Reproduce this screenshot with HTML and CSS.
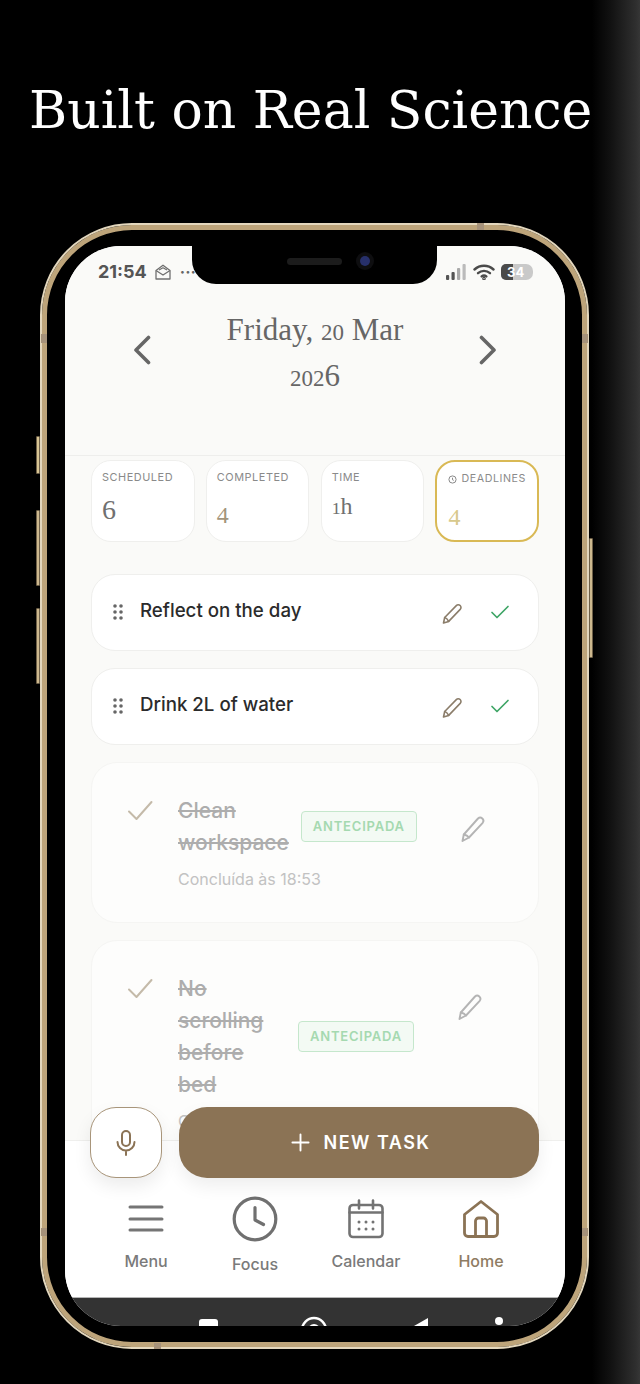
FILE: index.html
```html
<!DOCTYPE html>
<html lang="en">
<head>
<meta charset="utf-8">
<title>Built on Real Science</title>
<link rel="stylesheet" href="styles.css">
</head>
<body>
<div class="stage">
  <h1 class="headline">Built on Real Science</h1>
  <div class="phone">
    <span class="btn btn-l1"></span><span class="btn btn-l2"></span><span class="btn btn-l3"></span><span class="btn btn-r1"></span>
    <span class="band band-top"></span><span class="band band-lt"></span><span class="band band-rt"></span>
    <span class="band band-lb"></span><span class="band band-rb"></span><span class="band band-bot"></span>
    <div class="screen">
      <div class="notch"><span class="speaker"></span><span class="camera"></span></div>
      <header class="head">
        <div class="status">
          <div class="status-left">
            <span class="clock-time">21:54</span>
            <svg class="mail" viewBox="0 0 16 16" width="16" height="16" fill="none" stroke="#707070" stroke-width="1.3" stroke-linejoin="round"><path d="M1 6.5 8 1.2l7 5.3V15H1z"/><path d="M1 6.5 8 11l7-4.5"/><path d="M4 6 8 3.8 12 6"/></svg>
            <span class="dots">···</span>
          </div>
          <div class="status-right">
            <svg viewBox="0 0 21 16" width="21" height="16"><rect x="0" y="11" width="3.2" height="5" rx="1" fill="#555"/><rect x="5.5" y="8" width="3.2" height="8" rx="1" fill="#555"/><rect x="11" y="4" width="3.2" height="12" rx="1" fill="#aaa"/><rect x="16.5" y="0" width="3.2" height="16" rx="1" fill="#bbb"/></svg>
            <svg viewBox="0 0 22 16" width="22" height="16" fill="none" stroke="#4a4a4a" stroke-width="2.4" stroke-linecap="round"><path d="M1.5 5.5a14 14 0 0 1 19 0"/><path d="M5 9.2a9 9 0 0 1 12 0"/><path d="M8.6 12.4a4 4 0 0 1 4.8 0"/><circle cx="11" cy="14.6" r=".6"/></svg>
            <span class="battery"><span class="battery-fill"></span><span class="battery-num">34</span></span>
          </div>
        </div>
        <div class="datebar">
          <svg class="chev" viewBox="0 0 18 30" width="18" height="30" fill="none" stroke="#666" stroke-width="3.6" stroke-linecap="round" stroke-linejoin="round"><path d="M15.5 2.5 3 15l12.500 12.500"/></svg>
          <h2 class="date">Friday, <span class="os">20</span> Mar <span class="os">202</span>6</h2>
          <svg class="chev" viewBox="0 0 18 30" width="18" height="30" fill="none" stroke="#666" stroke-width="3.6" stroke-linecap="round" stroke-linejoin="round"><path d="M2.500 2.500 15 15 2.500 27.500"/></svg>
        </div>
      </header>

      <main class="list">
        <section class="stats">
          <div class="stat"><span class="stat-label">SCHEDULED</span><span class="stat-val val-six">6</span></div>
          <div class="stat"><span class="stat-label">COMPLETED</span><span class="stat-val val-four">4</span></div>
          <div class="stat"><span class="stat-label">TIME</span><span class="stat-val val-time"><span class="os">1</span>h</span></div>
          <div class="stat stat-alert">
            <span class="stat-label"><svg viewBox="0 0 10 10" width="9" height="9" fill="none" stroke="#888" stroke-width="1.100"><circle cx="5" cy="5" r="4"/><path d="M5 3v2.300l1.400.7"/></svg>DEADLINES</span>
            <span class="stat-val val-alert">4</span>
          </div>
        </section>

        <article class="task">
          <svg class="grip" viewBox="0 0 10 16" width="10" height="16" fill="#666"><circle cx="2" cy="2" r="1.800"/><circle cx="8" cy="2" r="1.800"/><circle cx="2" cy="8" r="1.800"/><circle cx="8" cy="8" r="1.800"/><circle cx="2" cy="14" r="1.800"/><circle cx="8" cy="14" r="1.800"/></svg>
          <span class="task-name">Reflect on the day</span>
          <svg class="edit" viewBox="0 0 24 24" width="24" height="24" fill="none" stroke="#8b7d6a" stroke-width="1.600" stroke-linejoin="round" stroke-linecap="round"><path d="M3.500 21 4.700 15.500 16.300 3.600a2.700 2.700 0 0 1 3.900 3.800L8.700 19.400z"/><path d="M4.700 15.500c1.200.3 3 2 4 3.900"/></svg>
          <svg class="tick" viewBox="0 0 20 16" width="20" height="16" fill="none" stroke="#3fa566" stroke-width="1.700" stroke-linecap="round" stroke-linejoin="round"><path d="M2 8.500 7 13.500 18 2.500"/></svg>
        </article>

        <article class="task">
          <svg class="grip" viewBox="0 0 10 16" width="10" height="16" fill="#666"><circle cx="2" cy="2" r="1.800"/><circle cx="8" cy="2" r="1.800"/><circle cx="2" cy="8" r="1.800"/><circle cx="8" cy="8" r="1.800"/><circle cx="2" cy="14" r="1.800"/><circle cx="8" cy="14" r="1.800"/></svg>
          <span class="task-name">Drink 2L of water</span>
          <svg class="edit" viewBox="0 0 24 24" width="24" height="24" fill="none" stroke="#8b7d6a" stroke-width="1.600" stroke-linejoin="round" stroke-linecap="round"><path d="M3.500 21 4.700 15.500 16.300 3.600a2.700 2.700 0 0 1 3.900 3.800L8.700 19.400z"/><path d="M4.700 15.500c1.200.3 3 2 4 3.900"/></svg>
          <svg class="tick" viewBox="0 0 20 16" width="20" height="16" fill="none" stroke="#3fa566" stroke-width="1.700" stroke-linecap="round" stroke-linejoin="round"><path d="M2 8.500 7 13.500 18 2.500"/></svg>
        </article>

        <article class="done">
          <svg class="done-check" viewBox="0 0 26 24" width="26" height="24" fill="none" stroke="#c4baa9" stroke-width="2" stroke-linecap="round" stroke-linejoin="round"><path d="M2 12.500 9.500 20 24.500 3"/></svg>
          <div class="done-body">
            <div class="done-row">
              <span class="done-title">Clean workspace</span>
              <span class="badge">ANTECIPADA</span>
            </div>
            <p class="done-sub">Concluída às 18:53</p>
          </div>
          <svg class="done-edit" viewBox="0 0 26 28" width="26" height="28" fill="none" stroke="#b4b4b4" stroke-width="1.900" stroke-linejoin="round" stroke-linecap="round"><path d="M2.500 26 3.800 19.500 18 3.500a3.200 3.200 0 0 1 4.700 4.300L9 22.500z"/><path d="M3.800 19.500c1.600.3 3.900 1.200 5.200 3"/></svg>
        </article>

        <article class="done">
          <svg class="done-check" viewBox="0 0 26 24" width="26" height="24" fill="none" stroke="#c4baa9" stroke-width="2" stroke-linecap="round" stroke-linejoin="round"><path d="M2 12.500 9.500 20 24.500 3"/></svg>
          <div class="done-body">
            <div class="done-row">
              <span class="done-title">No scrolling before bed</span>
              <span class="badge">ANTECIPADA</span>
            </div>
            <p class="done-sub">Concluída às 18:53</p>
          </div>
          <svg class="done-edit" viewBox="0 0 26 28" width="26" height="28" fill="none" stroke="#b4b4b4" stroke-width="1.900" stroke-linejoin="round" stroke-linecap="round"><path d="M2.500 26 3.800 19.500 18 3.500a3.200 3.200 0 0 1 4.700 4.300L9 22.500z"/><path d="M3.800 19.500c1.600.3 3.900 1.200 5.200 3"/></svg>
        </article>
      </main>

      <nav class="tabs">
        <a class="tab tab-menu">
          <svg viewBox="0 0 40 40" width="40" height="40" fill="none" stroke="#757575" stroke-width="3" stroke-linecap="round"><path d="M4 8h32M4 20h32M4 31h32"/></svg>
          <span>Menu</span>
        </a>
        <a class="tab tab-focus">
          <svg viewBox="0 0 46 46" width="46" height="46" fill="none" stroke="#707070" stroke-width="3.200" stroke-linecap="round" stroke-linejoin="round"><circle cx="23" cy="23" r="20.800"/><path d="M23 11.500V24l8.500 4.500"/></svg>
          <span>Focus</span>
        </a>
        <a class="tab tab-cal">
          <svg viewBox="0 0 40 40" width="40" height="40" fill="none" stroke="#737373" stroke-width="2.600" stroke-linecap="round" stroke-linejoin="round"><rect x="3.500" y="6" width="33" height="32" rx="3.500"/><path d="M3.500 13.500h33M13 1.500v8M27 1.500v8"/><g fill="#737373" stroke="none"><circle cx="13" cy="23" r="1.500"/><circle cx="20" cy="23" r="1.500"/><circle cx="27" cy="23" r="1.500"/><circle cx="13" cy="30" r="1.500"/><circle cx="20" cy="30" r="1.500"/><circle cx="27" cy="30" r="1.500"/></g></svg>
          <span>Calendar</span>
        </a>
        <a class="tab tab-home">
          <svg viewBox="0 0 40 40" width="40" height="40" fill="none" stroke="#8b7355" stroke-width="2.800" stroke-linecap="round" stroke-linejoin="round"><path d="M3.500 15.500 20 2.500l16.500 13V34a3.500 3.500 0 0 1-3.500 3.500H7A3.500 3.500 0 0 1 3.500 34z"/><path d="M14.500 37V22a3 3 0 0 1 3-3h5a3 3 0 0 1 3 3v15"/></svg>
          <span>Home</span>
        </a>
      </nav>

      <div class="sysbar">
        <svg viewBox="0 0 500 28" width="500" height="28" fill="#fff"><rect x="134" y="21" width="19" height="20" rx="3"/><circle cx="249" cy="32" r="12" fill="none" stroke="#fff" stroke-width="2.500"/><circle cx="249" cy="32" r="6"/><path d="M349 28 363 20v8z"/><circle cx="434" cy="23" r="4"/></svg>
      </div>

      <div class="actions">
        <button class="mic" type="button" aria-label="Voice">
          <svg viewBox="0 0 24 28" width="24" height="28" fill="none" stroke="#8b7355" stroke-width="2" stroke-linecap="round" stroke-linejoin="round"><rect x="8" y="2" width="8" height="15" rx="4"/><path d="M3.500 13a8.500 8.500 0 0 0 17 0M12 21.500V26"/></svg>
        </button>
        <button class="newtask" type="button">
          <svg viewBox="0 0 20 20" width="19" height="19" fill="none" stroke="#fff" stroke-width="2" stroke-linecap="round"><path d="M10 1.500v17M1.500 10h17"/></svg>
          <span>NEW TASK</span>
        </button>
      </div>
    </div>
  </div>
</div>
</body>
</html>
```
FILE: styles.css
```css
* { box-sizing: border-box; }

html, body { margin: 0; padding: 0; }

body {
  background: #000;
  font-family: "Inter", "Liberation Sans", sans-serif;
}

.stage {
  width: 640px;
  height: 1384px;
  overflow: hidden;
  background: linear-gradient(90deg, #000 0, #000 592px, #111 610px, #2f2f2f 636px, #363636 640px);
}

.headline {
  margin: 0;
  padding: 76px 0 0 29px;
  height: 223px;
  font-family: "DejaVu Serif", serif;
  font-size: 52px;
  line-height: 68px;
  font-weight: 400;
  letter-spacing: 0;
  color: #fff;
  white-space: nowrap;
}

.phone {
  position: relative;
  width: 549px;
  height: 1126px;
  margin-left: 40px;
  padding: 21px 22px 21px 23px;
  background: #000;
  border: 2px solid #e3d7bd;
  border-radius: 92px;
  box-shadow: inset 0 0 0 5px #bda47a;
}

.btn {
  position: absolute;
  width: 4px;
  background: #cdb88e;
  border: 1px solid #6e6048;
  border-radius: 1px;
}
.btn-l1 { left: -6px; top: 211px; height: 38px; background: #d8c594; }
.btn-l2 { left: -6px; top: 285px; height: 76px; }
.btn-l3 { left: -6px; top: 383px; height: 76px; }
.btn-r1 { right: -6px; top: 313px; height: 120px; }

.band { position: absolute; background: #a6927a; }
.band-top { left: 435px; top: -2px; width: 7px; height: 7px; }
.band-lt { left: -1px; top: 109px; width: 6px; height: 9px; }
.band-rt { right: -1px; top: 109px; width: 6px; height: 9px; }
.band-lb { left: -1px; top: 1003px; width: 6px; height: 8px; }
.band-rb { right: -1px; top: 1003px; width: 6px; height: 8px; }
.band-bot { left: 112px; bottom: -2px; width: 7px; height: 6px; }

.screen {
  position: relative;
  display: flex;
  flex-direction: column;
  width: 500px;
  height: 1080px;
  overflow: hidden;
  background: #fff;
  border-radius: 56px;
}

.notch {
  position: absolute;
  z-index: 3;
  top: 0;
  left: 127px;
  display: flex;
  align-items: center;
  width: 245px;
  height: 38px;
  padding: 0 0 8px 95px;
  background: #000;
  border-radius: 0 0 24px 24px;
}
.speaker {
  width: 55px;
  height: 7px;
  border-radius: 4px;
  background: #1c1c1c;
}
.camera {
  width: 10px;
  height: 10px;
  margin-left: 18px;
  border-radius: 50%;
  background: #27306b;
  box-shadow: 0 0 0 4px #0e0e10;
}

.head {
  flex: none;
  height: 210px;
  background: #fafaf8;
  border-bottom: 1px solid #eeeeec;
}

.status {
  display: flex;
  align-items: center;
  justify-content: space-between;
  height: 52px;
  padding: 0 32px 0 33px;
}
.status-left, .status-right { display: flex; align-items: center; }
.clock-time {
  font-size: 18px;
  font-weight: 700;
  line-height: 20px;
  color: #555;
}
.mail { margin-left: 8px; }
.dots {
  margin-left: 9px;
  font-size: 16px;
  font-weight: 700;
  line-height: 16px;
  letter-spacing: 0;
  color: #666;
}
.status-right { gap: 6px; }
.battery {
  position: relative;
  display: block;
  width: 32px;
  height: 16px;
  overflow: hidden;
  border-radius: 5px 7px 7px 5px;
  background: #c9c9c9;
}
.battery-fill {
  position: absolute;
  left: 0;
  top: 0;
  width: 12px;
  height: 16px;
  background: #4a4a4a;
}
.battery-num {
  position: absolute;
  left: 6px;
  top: 0;
  font-size: 13px;
  font-weight: 700;
  line-height: 16px;
  color: #fff;
}

.datebar {
  display: flex;
  align-items: flex-start;
  justify-content: space-between;
  padding: 10px 68px 0;
}
.chev { flex: none; margin-top: 27px; }
.date {
  width: 200px;
  margin: 0;
  text-align: center;
  font-family: "Liberation Serif", serif;
  font-size: 31px;
  line-height: 43px;
  font-weight: 400;
  color: #666;
}
.os { font-size: .74em; }

.list {
  flex: 1;
  min-height: 0;
  display: flex;
  flex-direction: column;
  gap: 17px;
  overflow: hidden;
  padding: 4px 26px 0;
  background: #fafaf8;
}

.stats {
  flex: none;
  display: grid;
  grid-template-columns: repeat(4, 103.500px);
  justify-content: space-between;
  height: 82px;
  margin-bottom: 15px;
}
.stat {
  display: flex;
  flex-direction: column;
  align-items: flex-start;
  padding: 9px 0 0 10px;
  background: #fff;
  border: 1px solid #efefed;
  border-radius: 20px;
}
.stat-alert {
  padding: 10px 0 0 11px;
  border: 2px solid #d9b955;
}
.stat-label {
  display: flex;
  align-items: center;
  gap: 4px;
  font-size: 10.900px;
  line-height: 14px;
  letter-spacing: .55px;
  color: #8a8a8a;
  white-space: nowrap;
}
.stat-alert .stat-label { font-size: 10.700px; }
.stat-val {
  font-family: "Liberation Serif", serif;
  line-height: 30px;
  color: #707070;
}
.val-six { font-size: 28px; margin-top: 11px; }
.val-four { font-size: 24px; margin-top: 16px; color: #a3957b; }
.val-time { font-size: 24px; margin-top: 7px; }
.val-alert { font-size: 24px; margin-top: 16px; color: #d8c98c; }

.task {
  flex: none;
  display: flex;
  align-items: center;
  height: 77px;
  padding: 0 28px 0 21px;
  background: #fff;
  border: 1px solid #efefed;
  border-radius: 24px;
}
.grip { flex: none; margin-top: -2px; }
.task-name {
  flex: 1;
  margin: -3px 0 0 17px;
  font-size: 18.700px;
  font-weight: 500;
  line-height: 24px;
  color: #2b2b2b;
}
.edit { flex: none; margin-top: 3px; }
.tick { flex: none; margin: -2px 0 0 26px; }

.done {
  flex: none;
  display: flex;
  align-items: flex-start;
  height: 161px;
  padding: 31px 0 0 35px;
  background: #fdfdfc;
  border: 1px solid #f5f5f3;
  border-radius: 26px;
}
.done:last-child { height: auto; padding-bottom: 32px; }
.done-check { flex: none; margin-top: 5px; }
.done-body { flex: none; margin-left: 25px; }
.done-row { display: flex; align-items: center; gap: 12px; }
.done-title {
  width: min-content;
  min-width: 108px;
  padding-top: 1px;
  font-size: 21px;
  font-weight: 500;
  line-height: 32px;
  color: #adadad;
  text-decoration: line-through;
}
.badge {
  flex: none;
  width: 116px;
  height: 31px;
  margin-top: -1px;
  text-align: center;
  font-size: 13px;
  font-weight: 600;
  line-height: 29px;
  letter-spacing: .8px;
  color: #a5d9b0;
  background: #f3faf4;
  border: 1px solid #c5e7cc;
  border-radius: 4px;
}
.done-sub {
  margin: 9px 0 0;
  font-size: 16px;
  line-height: 22px;
  color: #c2c2c2;
  white-space: nowrap;
}
.done-edit { flex: none; margin: 21px 0 0 43px; }

.tabs {
  flex: none;
  display: grid;
  grid-template-columns: 110px 108px 114px 116px;
  height: 157px;
  padding: 58px 0 0 26px;
  background: #fff;
  border-top: 1px solid #efefed;
}
.tab {
  display: flex;
  flex-direction: column;
  align-items: center;
  gap: 12px;
  font-size: 16px;
  font-weight: 500;
  line-height: 20px;
  color: #7a7a7a;
}
.tab svg { display: block; flex: none; }
.tab-focus { margin-top: -3px; }
.tab-home { color: #8f7c62; }

.sysbar {
  flex: none;
  height: 29px;
  background: #333;
  border-top: 1px solid #b5b5b5;
}
.sysbar svg { display: block; }

.actions {
  position: absolute;
  z-index: 2;
  left: 25px;
  right: 26px;
  bottom: 148px;
  display: flex;
  gap: 17px;
  height: 71px;
}
.mic {
  flex: none;
  display: flex;
  align-items: center;
  justify-content: center;
  width: 72px;
  padding: 0;
  background: #fff;
  border: 1px solid #a8957a;
  border-radius: 26px;
  box-shadow: 0 8px 18px rgba(0, 0, 0, .08);
}
.newtask {
  flex: 1;
  display: flex;
  align-items: center;
  justify-content: center;
  gap: 13px;
  padding: 0 0 0 4px;
  font-family: "Inter", "Liberation Sans", sans-serif;
  font-size: 18px;
  font-weight: 600;
  letter-spacing: 1.500px;
  color: #fff;
  background: #8b7355;
  border: 0;
  border-radius: 28px;
  box-shadow: 0 8px 18px rgba(0, 0, 0, .07);
}
```
